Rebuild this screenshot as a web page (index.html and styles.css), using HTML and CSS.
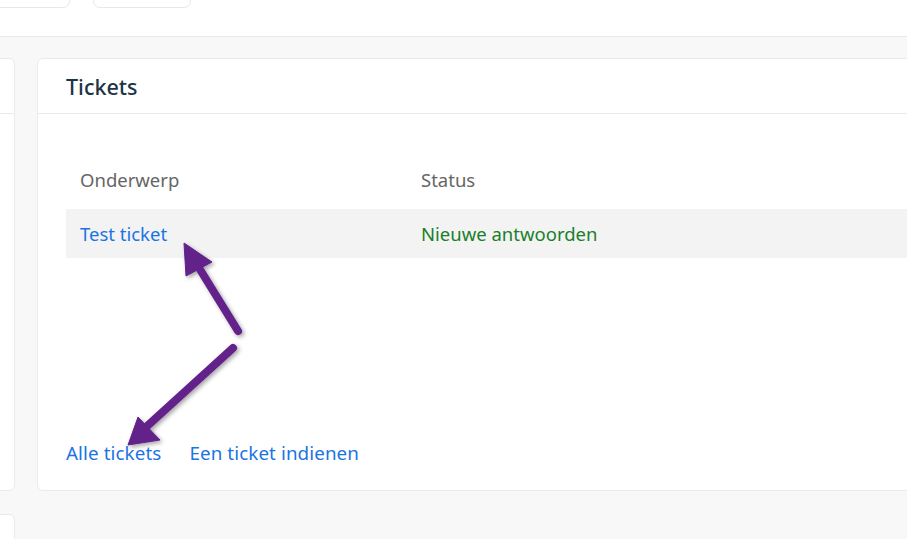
FILE: index.html
```html
<!DOCTYPE html>
<html lang="en">
<head>
    <meta charset="UTF-8">
    <meta name="viewport" content="width=device-width, initial-scale=1.0">
    <title>Tickets</title>
    <link rel="stylesheet" href="styles.css">
</head>
<body>
    <!-- Top toolbar, scrolled partly out of view -->
    <div class="toolbar">
        <button class="tool-button tool-first"></button>
        <button class="tool-button tool-second"></button>
    </div>

    <div class="content">
        <div class="side-card">
            <div class="card-header"></div>
        </div>

        <div class="card">
            <div class="card-header">
                <h2 class="card-title">Tickets</h2>
            </div>
            <div class="card-body">
                <table class="ticket-table">
                    <thead>
                        <tr>
                            <th class="col-subject">Onderwerp</th>
                            <th>Status</th>
                        </tr>
                    </thead>
                    <tbody>
                        <tr>
                            <td><a href="#" class="link">Test ticket</a></td>
                            <td class="status-new">Nieuwe antwoorden</td>
                        </tr>
                    </tbody>
                </table>

                <div class="card-links">
                    <a href="#" class="link">Alle tickets</a>
                    <a href="#" class="link">Een ticket indienen</a>
                </div>
            </div>
        </div>

        <div class="side-card side-card-bottom"></div>
    </div>

    <!-- Annotation arrows drawn over the page -->
    <svg class="annotation" width="907" height="539" viewBox="0 0 907 539">
        <defs>
            <filter id="shadow" x="-20%" y="-20%" width="140%" height="140%">
                <feDropShadow dx="2" dy="2" stdDeviation="2" flood-color="#000" flood-opacity="0.35"/>
            </filter>
        </defs>
        <g fill="#62238a" stroke="#62238a" filter="url(#shadow)">
            <line x1="238" y1="331" x2="196" y2="263" stroke-width="8" stroke-linecap="round"/>
            <polygon points="184,243 212,262 186,276" stroke-width="1" stroke-linejoin="round"/>
            <line x1="233" y1="348" x2="145" y2="428" stroke-width="8" stroke-linecap="round"/>
            <polygon points="128,445 138,417 160,440" stroke-width="1" stroke-linejoin="round"/>
        </g>
    </svg>
</body>
</html>
```

FILE: styles.css
```css
/* Page base */
body {
    margin: 0;
    background-color: #f8f8f8;
    font-family: "Noto Sans", "Open Sans", sans-serif;
    overflow: hidden;
    position: relative;
    height: 539px;
}

/* Toolbar at the top of the page */
.toolbar {
    height: 36px;
    background-color: #ffffff;
    border-bottom: 1px solid #e8e8e8;
    display: flex;
    gap: 23px;
    overflow: hidden;
}

.tool-button {
    height: 38px;
    margin-top: -30px;
    background-color: #ffffff;
    border: 1px solid #e8e8e8;
    border-radius: 7px;
}

.tool-first {
    width: 120px;
    margin-left: -50px;
}

.tool-second {
    width: 98px;
}

/* Content grid with the side column mostly off screen */
.content {
    display: grid;
    grid-template-columns: 200px 1000px;
    column-gap: 22px;
    row-gap: 23px;
    margin-left: -185px;
    padding-top: 21px;
}

.side-card,
.card {
    background-color: #ffffff;
    border: 1px solid #ebebeb;
    border-radius: 6px;
}

.side-card {
    height: 431px;
}

.side-card-bottom {
    height: 60px;
}

/* Card header */
.card-header {
    height: 54px;
    border-bottom: 1px solid #ebebeb;
    display: flex;
    align-items: center;
    padding: 0 28px;
}

.card-title {
    margin: 0;
    font-size: 21.5px;
    font-weight: 500;
    color: #1d3346;
}

/* Card body */
.card-body {
    padding: 46px 28px 12px;
}

.ticket-table {
    width: 100%;
    border-collapse: collapse;
}

.ticket-table th,
.ticket-table td {
    text-align: left;
    height: 49px;
    padding: 0 14px;
    font-size: 18.5px;
}

.ticket-table th {
    height: 39px;
    padding-bottom: 10px;
    font-weight: normal;
    color: #666666;
}

.col-subject {
    width: 313px;
}

.ticket-table tbody tr {
    background-color: #f3f3f3;
}

.status-new {
    color: #1a7f2b;
}

.link {
    color: #1a74e4;
    text-decoration: none;
}

/* Links below the table */
.card-links {
    margin-top: 183px;
    display: flex;
    gap: 28px;
    font-size: 18.8px;
    letter-spacing: 0.1px;
    line-height: 24px;
}

/* Arrows over the page */
.annotation {
    position: absolute;
    top: 0;
    left: 0;
    pointer-events: none;
}
```
